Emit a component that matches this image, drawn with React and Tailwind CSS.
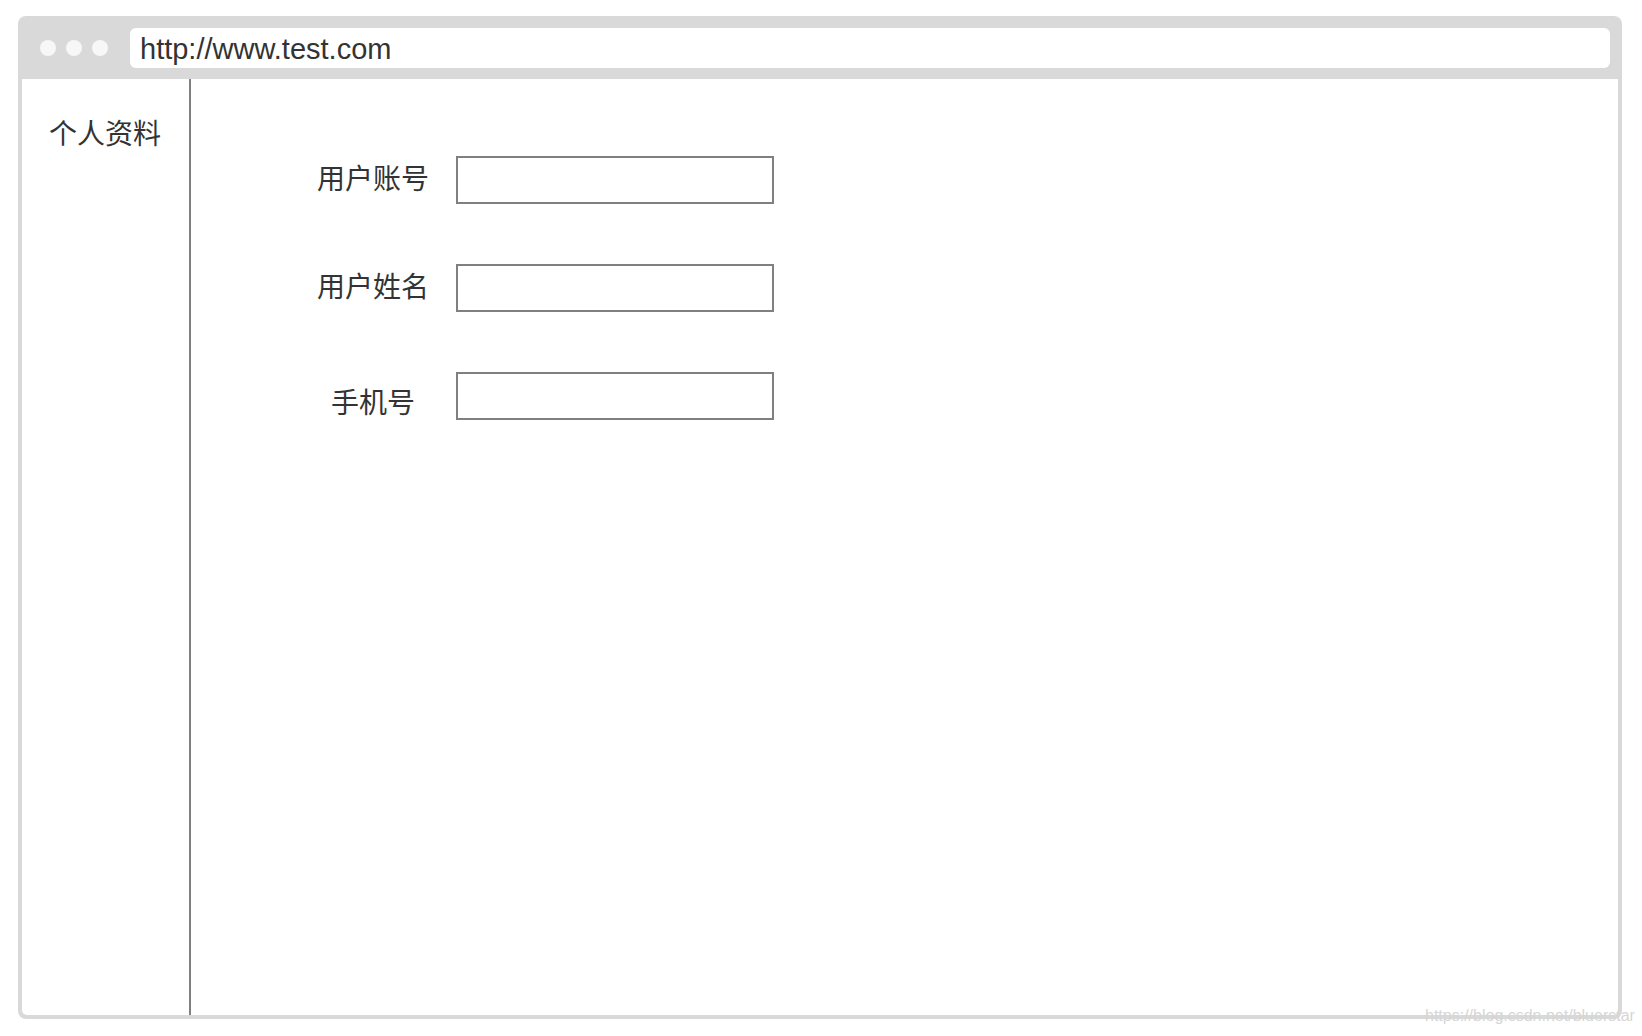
export default function App() {
  const fields = [
    { label: '用户账号', shift: 'mb-[7px]' },
    { label: '用户姓名', shift: 'mb-[7px]' },
    { label: '手机号', shift: 'mt-[9px]' },
  ];

  return (
    <div className="relative w-[1642px] h-[1036px] bg-white pt-[16px] pl-[18px]">
      <div className="w-[1604px] h-[1003px] rounded-[8px] bg-[#d9d9d9] flex flex-col">
        {/* browser bar */}
        <div className="h-[63px] flex items-center pl-[22px] pr-[12px]">
          <div className="flex items-center gap-[10px]">
            <span className="w-[16px] h-[16px] rounded-full bg-[#f7f7f7]" />
            <span className="w-[16px] h-[16px] rounded-full bg-[#f7f7f7]" />
            <span className="w-[16px] h-[16px] rounded-full bg-[#f7f7f7]" />
          </div>
          <div className="ml-[22px] flex-1 h-[40px] bg-white rounded-[6px] flex items-center pl-[10px] pt-[3px]">
            <span className="text-[29px] leading-none text-[#333] font-['Liberation_Sans',Arial,sans-serif]">
              http://www.test.com
            </span>
          </div>
        </div>

        {/* page body */}
        <div className="flex-1 mx-[4px] mb-[4px] bg-white rounded-b-[5px] flex">
          <div className="w-[169px] border-r-2 border-[#808080] pt-[39px] pl-[27px]">
            <span className="text-[28px] leading-none text-[#333] font-['Noto_Sans_CJK_SC',sans-serif]">
              个人资料
            </span>
          </div>

          <div className="flex-1 pt-[77px] pl-[117px] flex flex-col gap-[60px]">
            {fields.map((f) => (
              <div key={f.label} className="flex items-center">
                <label className={`w-[130px] text-center text-[28px] leading-none text-[#333] font-['Noto_Sans_CJK_SC',sans-serif] ${f.shift}`}>
                  {f.label}
                </label>
                <input
                  type="text"
                  className="ml-[18px] w-[318px] h-[48px] border-2 border-[#808080] bg-white outline-none"
                />
              </div>
            ))}
          </div>
        </div>
      </div>

      <span className="absolute left-[1425px] top-[1008px] text-[16px] leading-none text-[#d6d6d6] font-['Liberation_Sans',Arial,sans-serif]">
        https://blog.csdn.net/bluerstar
      </span>
    </div>
  );
}
